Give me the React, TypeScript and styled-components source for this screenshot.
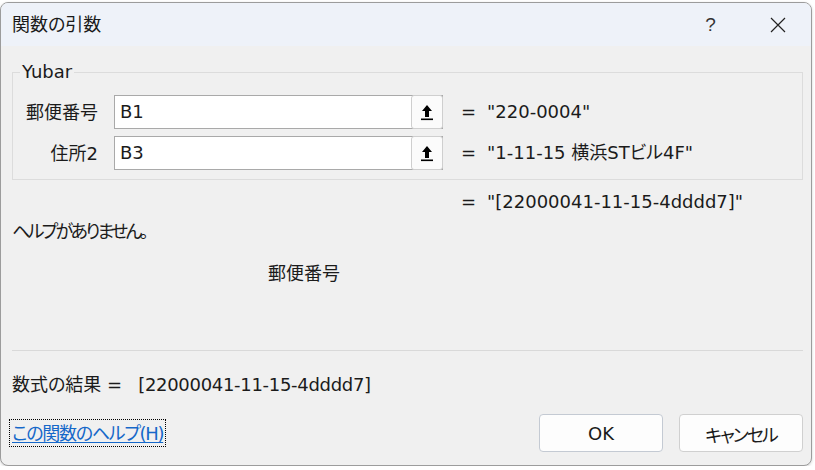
import React from 'react';
import styled, { createGlobalStyle } from 'styled-components';

const FONT = `"DejaVu Sans", "Noto Sans CJK JP", sans-serif`;

const GlobalStyle = createGlobalStyle`
  html, body {
    margin: 0;
    padding: 0;
    background: #ffffff;
  }
  body {
    font-family: ${FONT};
    font-size: 18px;
    color: #1b1b1b;
    font-feature-settings: "palt";
  }
`;

const Dialog = styled.div`
  box-sizing: border-box;
  width: 812px;
  height: 464px;
  margin-top: 2px;
  border: 1px solid #9c9c9c;
  border-radius: 8px;
  overflow: hidden;
  background: #f0f0f0;
  box-shadow: 0 1px 3px rgba(0, 0, 0, 0.18);
  display: flex;
  flex-direction: column;
`;

const TitleBar = styled.div`
  flex: none;
  height: 43px;
  background: #eef2f9;
  display: flex;
  align-items: center;
  padding-left: 11px;
`;

const Title = styled.div`
  flex: 1;
  line-height: 22px;
  padding-top: 1px;
  color: #1a1a1a;
`;

const CaptionButton = styled.div`
  width: 67px;
  height: 43px;
  display: flex;
  align-items: center;
  justify-content: center;
  color: #333333;
  font-family: "Liberation Sans", sans-serif;
  font-size: 19px;
`;

const Body = styled.div`
  flex: 1;
  display: flex;
  flex-direction: column;
  padding: 0 8px 12px 11px;
`;

const Group = styled.fieldset`
  margin: 15px 0 0;
  padding: 12px 0 9px;
  min-width: 0;
  border: 1px solid #dcdcdc;
  display: flex;
  flex-direction: column;
  gap: 7px;
`;

const Legend = styled.legend`
  margin-left: 7px;
  padding: 0 2px;
  line-height: 22px;
`;

const ArgRow = styled.div`
  display: flex;
  align-items: center;
  height: 34px;
`;

const ArgLabel = styled.div`
  width: 85px;
  margin-right: 16px;
  padding-top: 2px;
  text-align: right;
  line-height: 22px;
`;

const InputBox = styled.div`
  box-sizing: border-box;
  width: 329px;
  height: 34px;
  margin-right: 18px;
  border: 1px solid #a9a9a9;
  background: #ffffff;
  display: flex;
  align-items: center;
  padding-left: 5px;
  line-height: 22px;
`;

const RefButton = styled.div`
  box-sizing: border-box;
  margin: -1px -1px -1px auto;
  width: 32px;
  height: 34px;
  border: 1px solid #cfcfcf;
  border-radius: 3px;
  background: #fbfbfb;
  display: flex;
  align-items: center;
  justify-content: center;
`;

const Eq = styled.span`
  width: 26px;
  flex: none;
  line-height: 22px;
`;

const Value = styled.span`
  line-height: 22px;
  white-space: nowrap;
`;

const ResultLine = styled.div`
  margin-top: 11px;
  padding-left: 449px;
  display: flex;
`;

const TextLine = styled.div<{ $top: number; $indent?: number; $tight?: number }>`
  margin-top: ${(p) => p.$top}px;
  padding-left: ${(p) => p.$indent ?? 0}px;
  letter-spacing: ${(p) => p.$tight ?? 0}px;
  line-height: 22px;
`;

const Separator = styled.div`
  margin-top: 65px;
  height: 1px;
  background: #d9d9d9;
`;

const Formula = styled.div`
  margin-top: 23px;
  line-height: 22px;
  white-space: nowrap;
`;

const FormulaValue = styled.span`
  margin-left: 16px;
  letter-spacing: -0.3px;
`;

const Footer = styled.div`
  margin-top: 18px;
  height: 38px;
  display: flex;
  align-items: center;
  gap: 16px;
`;

const HelpLink = styled.a`
  margin-left: -3px;
  margin-right: auto;
  padding: 3px 2px 1px;
  border: 1px dotted #000000;
  line-height: 22px;
  letter-spacing: -1.3px;
  color: #1668c9;
  text-decoration: underline;
  text-underline-offset: 2px;
  cursor: pointer;
`;

const Button = styled.button<{ $default?: boolean; $tight?: number }>`
  box-sizing: border-box;
  width: 124px;
  height: 38px;
  border: 1px solid ${(p) => (p.$default ? '#c4cad3' : '#d0d0d0')};
  border-radius: 4px;
  background: #fdfdfd;
  font-family: ${FONT};
  font-size: 18px;
  font-feature-settings: "palt";
  letter-spacing: ${(p) => p.$tight ?? 0}px;
  color: #1b1b1b;
  padding: 1px 0 0;
`;

const RefIcon = () => (
  <svg width="14" height="17" viewBox="0 0 14 17">
    <path d="M7 1 L12 7 H9 V13 H5 V7 H2 Z" fill="#000" />
    <rect x="1" y="14.5" width="12" height="1.6" fill="#000" />
  </svg>
);

const CloseIcon = () => (
  <svg width="16" height="16" viewBox="0 0 16 16">
    <path d="M1 1 L15 15 M15 1 L1 15" stroke="#222" strokeWidth="1.2" fill="none" />
  </svg>
);

const args = [
  { label: '郵便番号', ref: 'B1', value: '"220-0004"' },
  { label: '住所2', ref: 'B3', value: '"1-11-15 横浜STビル4F"' },
];

export default function App() {
  return (
    <>
      <GlobalStyle />
      <Dialog>
        <TitleBar>
          <Title>関数の引数</Title>
          <CaptionButton>?</CaptionButton>
          <CaptionButton>
            <CloseIcon />
          </CaptionButton>
        </TitleBar>
        <Body>
          <Group>
            <Legend>Yubar</Legend>
            {args.map((a) => (
              <ArgRow key={a.label}>
                <ArgLabel>{a.label}</ArgLabel>
                <InputBox>
                  {a.ref}
                  <RefButton>
                    <RefIcon />
                  </RefButton>
                </InputBox>
                <Eq>=</Eq>
                <Value>{a.value}</Value>
              </ArgRow>
            ))}
          </Group>
          <ResultLine>
            <Eq>=</Eq>
            <Value>"[22000041-11-15-4dddd7]"</Value>
          </ResultLine>
          <TextLine $top={8} $tight={-2.7}>
            ヘルプがありません。
          </TextLine>
          <TextLine $top={20} $indent={256}>
            郵便番号
          </TextLine>
          <Separator />
          <Formula>
            数式の結果 =<FormulaValue>[22000041-11-15-4dddd7]</FormulaValue>
          </Formula>
          <Footer>
            <HelpLink>この関数のヘルプ(H)</HelpLink>
            <Button $default>OK</Button>
            <Button $tight={-2}>キャンセル</Button>
          </Footer>
        </Body>
      </Dialog>
    </>
  );
}
